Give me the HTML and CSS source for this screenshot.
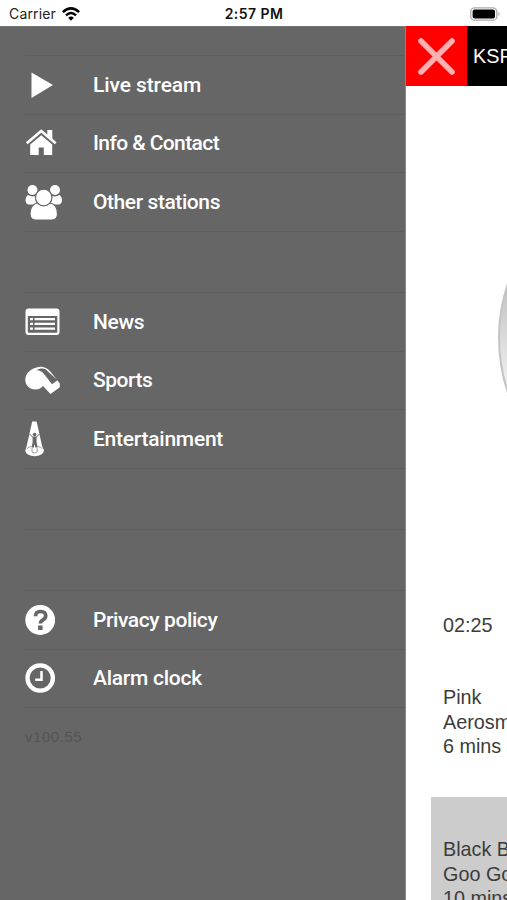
FILE: index.html
```html
<!DOCTYPE html>
<html lang="en">
<head>
<meta charset="utf-8">
<title>Radio</title>
<link rel="stylesheet" href="styles.css">
</head>
<body>
<header class="status">
  <div class="carrier"><span>Carrier</span>
    <svg width="18" height="14" viewBox="0 0 18 14"><g fill="none" stroke="#000" stroke-width="2.5"><path d="M.9 5.1Q9-2.4 17.1 5.1"/><path d="M4 8.4Q9 3.7 14 8.4"/></g><path d="M6.2 10.7Q9 8.2 11.8 10.7L9 13.7z"/></svg>
  </div>
  <div class="time">2:57 PM</div>
  <svg class="battery" width="31" height="14" viewBox="0 0 31 14"><rect x=".8" y=".8" width="26" height="12.4" rx="3.8" fill="#fff" stroke="#aaa" stroke-width="1.3"/><rect x="2.6" y="2.6" width="22.4" height="8.8" rx="2"/><path d="M28.5 4.8q2.4 2.2 0 4.4z" fill="#aaa"/></svg>
</header>
<div class="screen">
  <nav class="drawer">
    <ul class="group">
      <li><span class="icon"><svg width="38" height="38" viewBox="0 0 38 38"><path d="M6.500 6.500L28 19 6.500 32z"/></svg></span><span class="label live">Live stream</span></li>
      <li><span class="icon"><svg width="38" height="38" viewBox="0 0 38 38"><path d="M1.800 19.200L16.200 7 30.700 19.200" fill="none" stroke="#fff" stroke-width="2.700"/><path d="M22.300 6h5v9.500l-5-4.200zM5.200 20.500L16.200 11.200l11 9.300V31h-8.400v-7.500h-5.100V31H5.200z"/></svg></span><span class="label info">Info &amp; Contact</span></li>
      <li><span class="icon"><svg width="38" height="38" viewBox="0 0 38 38"><circle cx="7.500" cy="7" r="5"/><circle cx="30" cy="7" r="5"/><path d="M3 12q4.500 2.500 8 .5l3 8-3 1H3q-2.500-1-2.500-4 0-4 2.500-5.500zM34.500 12q-4.500 2.500-8 .5l-3 8 3 1h8q2.500-1 2.500-4 0-4-2.500-5.500z"/><path class="cut" d="M12 20Q5 22 5 31q0 6 5.500 6H27q5.500 0 5.500-6 0-9-7-11-6.500 4-13.500 0z"/><circle class="cut" cx="18.700" cy="14.500" r="8.300"/></svg></span><span class="label other">Other stations</span></li>
    </ul>
    <ul class="group">
      <li><span class="icon"><svg width="38" height="38" viewBox="0 0 38 38"><path fill-rule="evenodd" d="M3.500 5.500h28q3 0 3 3v20.500q0 3-3 3h-28q-3 0-3-3V8.500q0-3 3-3zM2.800 13v15.800q0 1 1 1h27.500q1 0 1-1V13z"/><path d="M5 15h3v2.300H5zm4.500 0h20.500v2.300H9.500zM5 19.700h3V22H5zm4.500 0h20.500V22H9.500zM5 24.500h3v2.300H5zm4.500 0h20.500v2.300H9.500z"/></svg></span><span class="label news">News</span></li>
      <li><span class="icon"><svg width="38" height="38" viewBox="0 0 38 38"><path fill-rule="evenodd" d="M1 15C3 9 12 5 18 6c4 .8 6.500 3.500 8.500 6l8.300 10.500v3.800L25.500 33 18 25c-4 5-11.500 4.500-15.500 0-2.500-3-2.800-6.800-1.500-10zM11 9.300c5-.2 6.800 2.200 9 5l7 9 5.500-4L23.500 11C20 6.500 16 6.800 11 9.300z"/></svg></span><span class="label sports">Sports</span></li>
      <li><span class="icon"><svg width="38" height="38" viewBox="0 0 38 38"><path d="M7.200 1.500h4.400L17.800 29H1z"/><ellipse cx="9.600" cy="30.500" rx="9.300" ry="5.700"/><circle cx="9.600" cy="14.500" r="1.800" fill="#666"/><path d="M4.500 14l3 3h4l3-3" fill="none" stroke="#666" stroke-width="1"/><path d="M7.600 17h4v5.500l1.200 5h-2.400L9.600 24l-.8 3.500H6.500l1.100-5z" fill="#666"/><path d="M1.800 29q2-2.500 4.700-2.500M17.500 29q-2-2.500-4.700-2.500M7 28v4q2.600 2 5.200 0v-4" fill="none" stroke="#888" stroke-width=".8"/></svg></span><span class="label entertainment">Entertainment</span></li>
    </ul>
    <hr class="divider">
    <ul class="group">
      <li><span class="icon"><svg width="38" height="38" viewBox="0 0 38 38"><circle cx="15.200" cy="19" r="14.900"/><path d="M10.500 15.200q0-4.700 5-4.700 5.200 0 5.200 4.200 0 2.700-3 4.300-2.200 1.300-2.200 3.500" fill="none" stroke="#666" stroke-width="3.700"/><path d="M13.100 24.500h4.500V29h-4.500z" fill="#666"/></svg></span><span class="label privacy">Privacy policy</span></li>
      <li><span class="icon"><svg width="38" height="38" viewBox="0 0 38 38"><circle cx="15.200" cy="19" r="12.700" fill="none" stroke="#fff" stroke-width="4.300"/><path d="M16.500 12v8.800h-6.300" fill="none" stroke="#fff" stroke-width="2.500"/></svg></span><span class="label alarm">Alarm clock</span></li>
    </ul>
    <p class="version">v100.55</p>
  </nav>
  <main class="player">
    <div class="bar">
      <button class="close" aria-label="Close"><svg width="37" height="37" viewBox="0 0 37 37"><path d="M3 3l31 31M34 3L3 34" stroke="#ffb0b0" stroke-width="5.600" stroke-linecap="round"/></svg></button>
      <span class="station">KSPN</span>
    </div>
    <div class="stage"><div class="disc"></div></div>
    <div class="clock">02:25</div>
    <div class="track">Pink<br>Aerosmith<br>6 mins ago</div>
    <div class="track shaded">Black Balloon<br>Goo Goo Dolls<br>10 mins ago</div>
  </main>
</div>
</body>
</html>
```
FILE: styles.css
```css
* { box-sizing: border-box; }
body {
  margin: 0;
  width: 507px;
  height: 900px;
  overflow: hidden;
  background: #fff;
  font-family: "Liberation Sans", sans-serif;
}
svg { display: block; }
.status {
  display: grid;
  grid-template-columns: 1fr auto 1fr;
  align-items: center;
  height: 26px;
  padding: 1px 6px 0 9px;
  font-family: Inter, sans-serif;
  font-size: 14px;
  color: #222;
}
.carrier { display: flex; align-items: center; gap: 6px; letter-spacing: .15px; }
.time { margin-right: 2px; font-weight: 600; font-size: 14px; letter-spacing: .45px; color: #111; }
.battery { justify-self: end; }
.screen { display: flex; height: 874px; }
.drawer {
  flex: 0 0 406px;
  padding: 28px 0 0 25px;
  background: #666;
  border-top: 1px solid #777;
  border-right: 1px solid #888;
}
.group {
  margin: 0 0 60px;
  padding: 0;
  list-style: none;
  border-top: 1px solid #5f5f5f;
}
.group li {
  display: flex;
  align-items: center;
  height: 58.67px;
  border-bottom: 1px solid #5f5f5f;
}
.icon { width: 68px; }
.icon svg { fill: #fff; }
.icon .cut { stroke: #666; stroke-width: 1.2; }
.label {
  font: 500 21px/30px Roboto, sans-serif;
  color: #fff;
  white-space: nowrap;
}
.live { letter-spacing: -.1px; }
.info { letter-spacing: -.6px; }
.other { letter-spacing: -.42px; }
.news { letter-spacing: -.3px; }
.sports { letter-spacing: -.45px; }
.entertainment { letter-spacing: -.25px; }
.privacy { letter-spacing: -.4px; }
.alarm { letter-spacing: -.25px; }
.divider {
  height: 1px;
  margin: 0 0 60px;
  border: 0;
  background: #5f5f5f;
}
.version {
  margin: -41px 0 0;
  font-size: 15px;
  line-height: 20px;
  letter-spacing: .55px;
  color: #545454;
}
.player {
  flex: 0 0 101px;
  overflow: hidden;
  color: #3c3c3c;
  font-size: 19.8px;
  line-height: 24.5px;
  white-space: nowrap;
}
.bar { display: flex; align-items: center; height: 60px; background: #000; color: #fff; }
.close {
  display: flex;
  align-items: center;
  justify-content: center;
  flex: 0 0 61px;
  height: 60px;
  padding: 0;
  border: 0;
  background: #f00;
}
.station { padding: 1px 0 0 6px; }
.stage { height: 502px; padding: 80px 0 0 92px; }
.disc {
  width: 344px;
  height: 344px;
  border: 2px solid #c4c4c4;
  border-radius: 50%;
  background: linear-gradient(#bbb 30%, #f2f2f2 65%);
}
.clock { padding: 25px 0 0 37px; height: 83px; }
.track { height: 126px; margin-left: 25px; padding: 14px 0 0 12px; }
.shaded { padding-top: 40px; background: #ccc; }
```
